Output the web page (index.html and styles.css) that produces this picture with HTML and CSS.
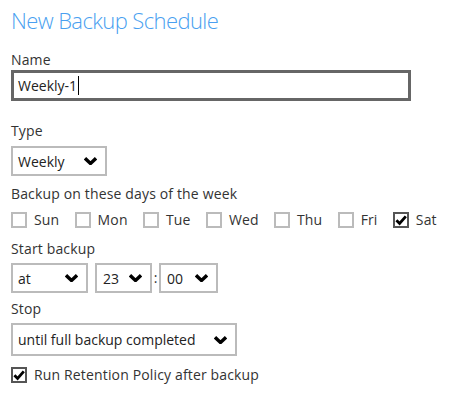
FILE: index.html
```html
<!DOCTYPE html>
<html>
<head>
<meta charset="utf-8">
<link rel="stylesheet" href="styles.css">
</head>
<body>
<div class="page">
  <h1 class="title">New Backup Schedule</h1>

  <div class="label label-name">Name</div>
  <div class="input">Weekly-1<span class="caret"></span></div>

  <div class="label label-type">Type</div>
  <div class="select select-type"><span>Weekly</span><svg class="chev" viewBox="0 0 13 8" width="13" height="8"><path d="M1 1.3 L6.5 6.5 L12 1.3" /></svg></div>

  <div class="label label-days">Backup on these days of the week</div>
  <div class="days">
    <label class="check"><span class="box"></span><span>Sun</span></label>
    <label class="check"><span class="box"></span><span>Mon</span></label>
    <label class="check"><span class="box"></span><span>Tue</span></label>
    <label class="check"><span class="box"></span><span>Wed</span></label>
    <label class="check"><span class="box"></span><span>Thu</span></label>
    <label class="check"><span class="box"></span><span>Fri</span></label>
    <label class="check"><span class="box checked"><svg viewBox="0 0 12 12" width="12" height="12"><path d="M1.4 6.2 L4.6 9.4 L10.8 2.4" /></svg></span><span>Sat</span></label>
  </div>

  <div class="label label-start">Start backup</div>
  <div class="time-row">
    <div class="select select-at"><span>at</span><svg class="chev" viewBox="0 0 13 8" width="13" height="8"><path d="M1 1.3 L6.5 6.5 L12 1.3" /></svg></div>
    <div class="select select-hour"><span>23</span><svg class="chev" viewBox="0 0 13 8" width="13" height="8"><path d="M1 1.3 L6.5 6.5 L12 1.3" /></svg></div>
    <span class="colon">:</span>
    <div class="select select-min"><span>00</span><svg class="chev" viewBox="0 0 13 8" width="13" height="8"><path d="M1 1.3 L6.5 6.5 L12 1.3" /></svg></div>
  </div>

  <div class="label label-stop">Stop</div>
  <div class="select select-stop"><span>until full backup completed</span><svg class="chev" viewBox="0 0 13 8" width="13" height="8"><path d="M1 1.3 L6.5 6.5 L12 1.3" /></svg></div>

  <label class="check retention"><span class="box checked"><svg viewBox="0 0 12 12" width="12" height="12"><path d="M1.4 6.2 L4.6 9.4 L10.8 2.4" /></svg></span><span>Run Retention Policy after backup</span></label>
</div>
</body>
</html>
```
FILE: styles.css
```css
html, body {
  margin: 0;
  padding: 0;
  background: #ffffff;
}

body {
  font-family: "Open Sans", "Noto Sans", "Liberation Sans", sans-serif;
  font-size: 14px;
  color: #333333;
}

.page {
  padding: 5px 11px 0 11px;
}

.title {
  margin: 0;
  font-size: 22px;
  line-height: 30px;
  font-weight: 300;
  letter-spacing: -0.6px;
  color: #4a9ff0;
}

.label {
  font-size: 14px;
  line-height: 19px;
  color: #333333;
  letter-spacing: 0.15px;
}

.label-name { margin-top: 15px; }
.label-type { margin-top: 20px; }
.label-days { margin-top: 8px; }
.label-start { margin-top: 10px; }
.label-stop { margin-top: 6px; }

.input {
  box-sizing: border-box;
  margin-top: 1px;
  width: 400px;
  height: 31px;
  border: 3px solid #666666;
  padding-left: 4px;
  display: flex;
  align-items: center;
  color: #222222;
  font-size: 14px;
}

.caret {
  display: inline-block;
  width: 1px;
  height: 19px;
  background: #000000;
  margin-left: 1px;
}

.select {
  box-sizing: border-box;
  height: 30px;
  border: 2px solid #bbbbbb;
  display: flex;
  align-items: center;
  justify-content: space-between;
  padding: 0 8px 0 5px;
  color: #222222;
  font-size: 14px;
}

.chev {
  display: block;
  flex: none;
}

.chev path {
  fill: none;
  stroke: #000000;
  stroke-width: 3.4;
  stroke-linejoin: miter;
  stroke-linecap: butt;
}

.select-type {
  margin-top: 6px;
  width: 96px;
}

.days {
  margin-top: 7px;
  display: flex;
  gap: 15.3px;
}

.check {
  display: flex;
  align-items: center;
  gap: 7px;
  height: 19px;
  line-height: 19px;
  color: #333333;
  letter-spacing: 0.15px;
}

.box {
  box-sizing: border-box;
  width: 16px;
  height: 16px;
  border: 2px solid #bbbbbb;
  display: flex;
  align-items: center;
  justify-content: center;
  flex: none;
}

.box.checked {
  border-color: #555555;
}

.box svg path {
  fill: none;
  stroke: #000000;
  stroke-width: 2.8;
  stroke-linejoin: miter;
}

.time-row {
  margin-top: 5px;
  display: flex;
  align-items: center;
}

.select-at { width: 77px; margin-right: 7px; }
.select-hour { width: 57px; padding-left: 6px; }
.select-min { width: 59px; padding-left: 6px; }

.colon {
  width: 7px;
  text-align: center;
  color: #333333;
  line-height: 30px;
}

.select-stop {
  margin-top: 5px;
  width: 226px;
  height: 33px;
}

.retention {
  margin-top: 9px;
}
```
